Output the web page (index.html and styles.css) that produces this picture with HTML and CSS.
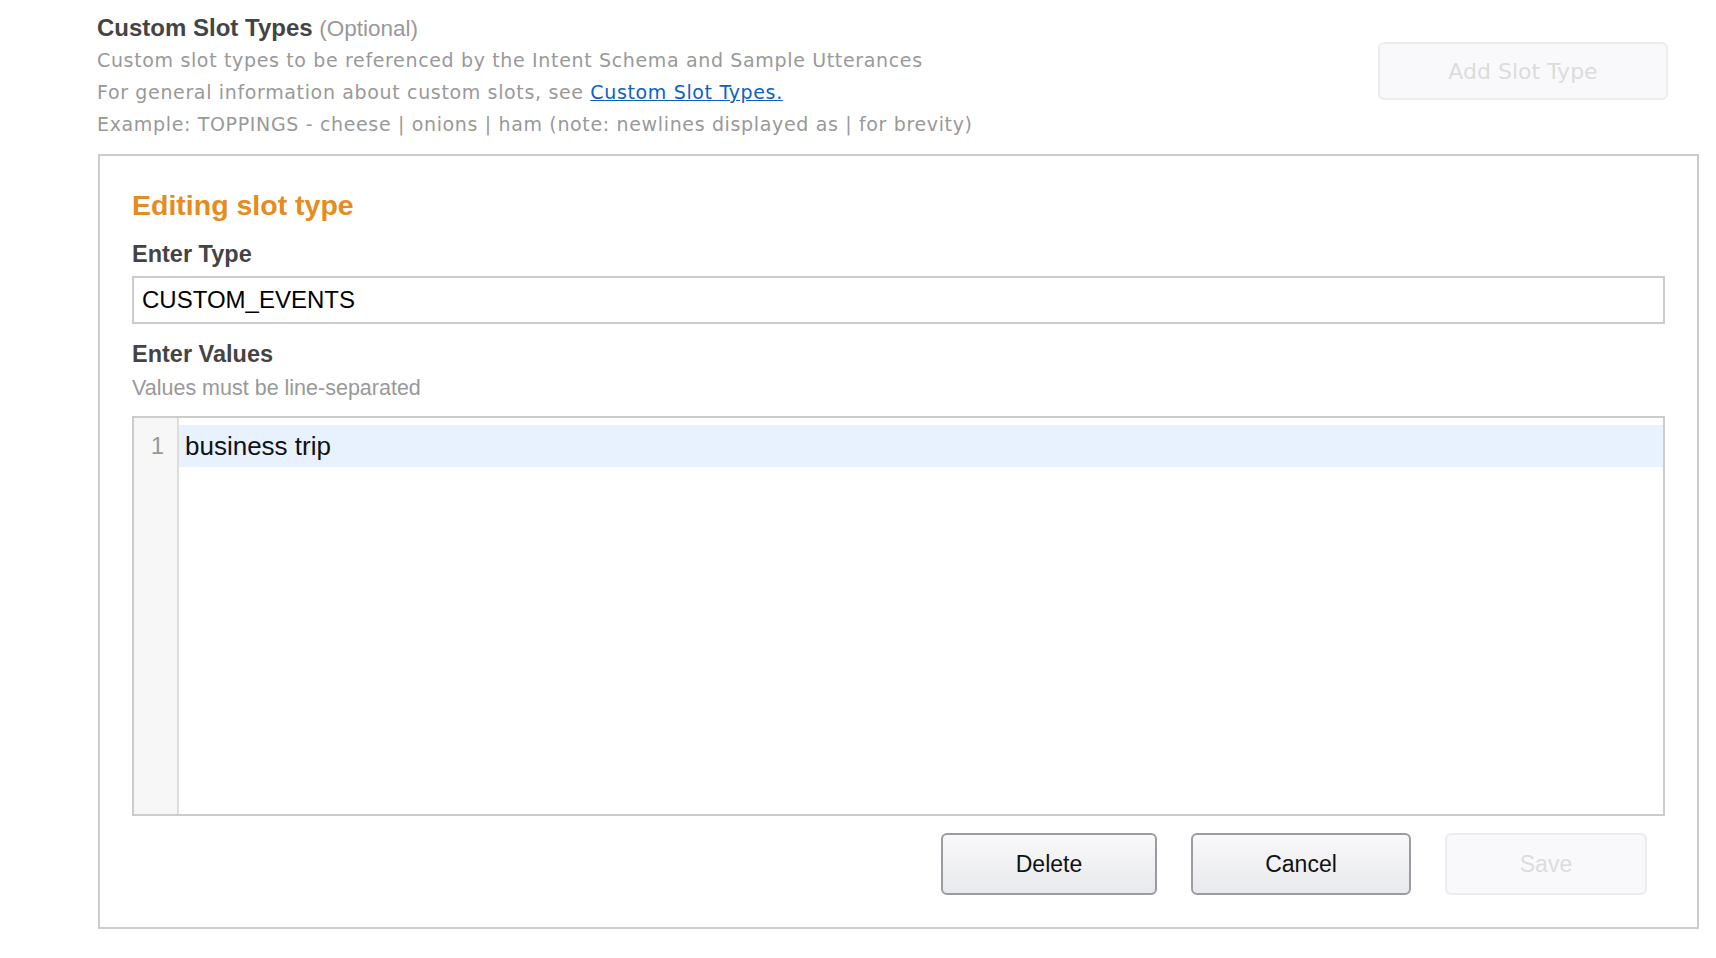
FILE: index.html
```html
<!DOCTYPE html>
<html lang="en">
<head>
    <meta charset="UTF-8">
    <meta name="viewport" content="width=device-width, initial-scale=1.0">
    <title>Custom Slot Types</title>
    <link rel="stylesheet" href="styles.css">
</head>
<body>
    <div class="page">
        <div class="slot-header">
            <div class="intro">
                <div class="title">Custom Slot Types <span class="optional">(Optional)</span></div>
                <p class="desc">Custom slot types to be referenced by the Intent Schema and Sample Utterances</p>
                <p class="desc">For general information about custom slots, see <a href="#">Custom Slot Types.</a></p>
                <p class="desc">Example: TOPPINGS - cheese | onions | ham (note: newlines displayed as | for brevity)</p>
            </div>
            <button class="btn btn-disabled add-btn">Add Slot Type</button>
        </div>

        <div class="edit-box">
            <h2 class="edit-title">Editing slot type</h2>

            <label class="field-label">Enter Type</label>
            <input class="type-input" type="text" value="CUSTOM_EVENTS">

            <label class="field-label values-label">Enter Values</label>
            <div class="hint">Values must be line-separated</div>

            <div class="code-editor">
                <div class="gutter">
                    <div class="line-no">1</div>
                </div>
                <div class="lines">
                    <div class="line active">business trip</div>
                </div>
            </div>

            <div class="actions">
                <button class="btn delete-btn">Delete</button>
                <button class="btn cancel-btn">Cancel</button>
                <button class="btn btn-disabled save-btn">Save</button>
            </div>
        </div>
    </div>
</body>
</html>
```

FILE: styles.css
```css
body {
    margin: 0;
    background: #fff;
    font-family: 'Liberation Sans', Arial, sans-serif;
}

.page {
    padding: 13px 17px 0 97px;
}

.slot-header {
    display: flex;
    justify-content: space-between;
    align-items: flex-start;
    padding-right: 31px;
}

.title {
    font-size: 24px;
    font-weight: bold;
    color: #444;
    line-height: 30px;
}

.optional {
    font-weight: normal;
    color: #999;
    font-size: 22.5px;
}

.desc {
    margin: 0;
    font-family: 'DejaVu Sans', Verdana, sans-serif;
    font-size: 19px;
    letter-spacing: 0.65px;
    line-height: 32px;
    color: #999;
}

.desc a {
    color: #0b63c1;
}

.btn {
    font-family: 'Liberation Sans', Arial, sans-serif;
    font-size: 23px;
    height: 62px;
    border: 2px solid #9b9ca1;
    border-radius: 6px;
    background: linear-gradient(#f9f9fa, #e8e9ec);
    color: #111;
    cursor: pointer;
}

.btn-disabled {
    border-color: #ececef;
    background: #f9f9fb;
    color: #dcdcdc;
    cursor: default;
}

.add-btn {
    font-family: 'DejaVu Sans', Verdana, sans-serif;
    font-size: 22px;
    width: 290px;
    height: 58px;
    margin-top: 29px;
}

.edit-box {
    margin-top: 14px;
    margin-left: 1px;
    border: 2px solid #ccc;
    padding: 33px 32px 32px 32px;
}

.edit-title {
    margin: 0;
    font-size: 28.5px;
    line-height: 32px;
    color: #e68b20;
}

.field-label {
    display: block;
    margin-top: 20px;
    font-size: 23.5px;
    font-weight: bold;
    line-height: 26px;
    color: #444;
}

.type-input {
    display: block;
    box-sizing: border-box;
    width: 100%;
    height: 48px;
    margin-top: 9px;
    padding: 0 8px;
    border: 2px solid #ccc;
    font-family: 'Liberation Sans', Arial, sans-serif;
    font-size: 24px;
    color: #000;
    outline: none;
}

.values-label {
    margin-top: 17px;
}

.hint {
    margin-top: 9px;
    font-size: 21.5px;
    line-height: 24px;
    color: #999;
}

.code-editor {
    display: flex;
    height: 396px;
    margin-top: 16px;
    border: 2px solid #ccc;
}

.gutter {
    width: 43px;
    background: #f7f7f7;
    border-right: 2px solid #ddd;
    padding-top: 7px;
}

.line-no {
    height: 42px;
    line-height: 42px;
    padding-right: 13px;
    text-align: right;
    font-size: 24px;
    color: #999;
}

.lines {
    flex: 1;
    padding-top: 7px;
}

.line {
    height: 42px;
    line-height: 42px;
    padding-left: 6px;
    font-size: 26px;
    color: #111;
}

.line.active {
    background: #e8f2fe;
}

.actions {
    display: flex;
    justify-content: flex-end;
    gap: 34px;
    margin-top: 17px;
    padding-right: 18px;
}

.delete-btn {
    width: 216px;
}

.cancel-btn {
    width: 220px;
}

.save-btn {
    width: 202px;
}
```
